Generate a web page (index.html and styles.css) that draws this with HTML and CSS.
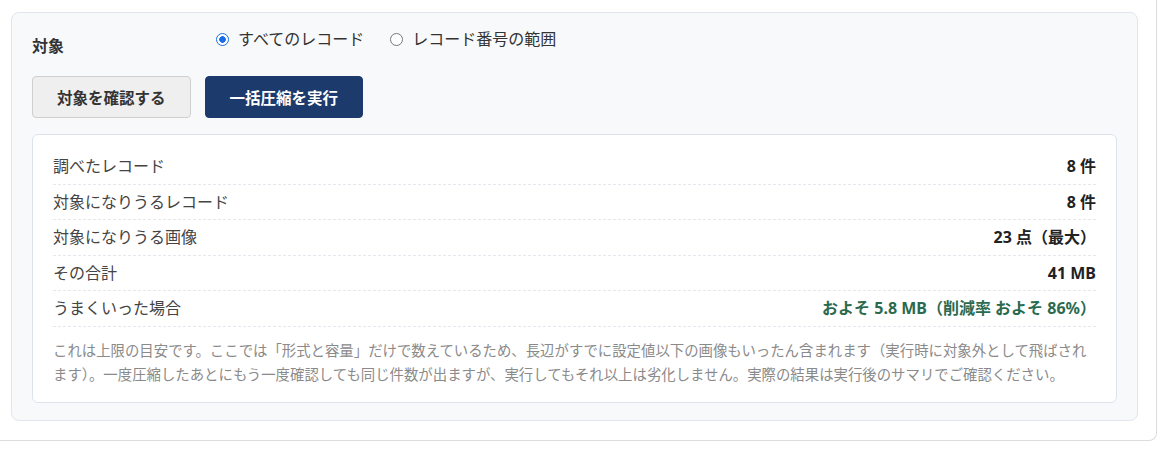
FILE: index.html
```html
<!DOCTYPE html>
<html lang="ja">
<head>
<meta charset="utf-8">
<title>一括圧縮</title>
<link rel="stylesheet" href="styles.css">
</head>
<body>
<div class="page">
  <section class="panel">
    <div class="field">
      <div class="field-label">対象</div>
      <div class="radios">
        <label class="radio"><input type="radio" name="target" checked><span>すべてのレコード</span></label>
        <label class="radio"><input type="radio" name="target"><span>レコード番号の範囲</span></label>
      </div>
    </div>
    <div class="actions">
      <button class="btn btn-secondary" type="button">対象を確認する</button>
      <button class="btn btn-primary" type="button">一括圧縮を実行</button>
    </div>
    <div class="result">
      <dl class="stats">
        <div class="stat"><dt>調べたレコード</dt><dd>8 件</dd></div>
        <div class="stat"><dt>対象になりうるレコード</dt><dd>8 件</dd></div>
        <div class="stat"><dt>対象になりうる画像</dt><dd>23 点（最大）</dd></div>
        <div class="stat"><dt>その合計</dt><dd>41 MB</dd></div>
        <div class="stat"><dt>うまくいった場合</dt><dd class="good">およそ 5.8 MB（削減率 およそ 86%）</dd></div>
      </dl>
      <p class="note">これは上限の目安です。ここでは「形式と容量」だけで数えているため、長辺がすでに設定値以下の画像もいったん含まれます（実行時に対象外として飛ばされます）。一度圧縮したあとにもう一度確認しても同じ件数が出ますが、実行してもそれ以上は劣化しません。実際の結果は実行後のサマリでご確認ください。</p>
    </div>
  </section>
</div>
</body>
</html>
```

FILE: styles.css
```css
* { box-sizing: border-box; }

body {
  margin: 0;
  background: #ffffff;
  font-family: "Noto Sans", "Noto Sans CJK JP", sans-serif;
  color: #333;
}

.page {
  width: 1157px;
  padding: 12px 18px 19px 11px;
  border-right: 1px solid #dcdcdc;
  border-bottom: 1px solid #dcdcdc;
  border-bottom-right-radius: 8px;
  background: #fff;
}

.panel {
  background: #f8f9fb;
  border: 1px solid #e1e6ee;
  border-radius: 8px;
  padding: 19px 20px 17px 20px;
}

.field {
  display: grid;
  grid-template-columns: 184px 1fr;
}

.field-label {
  font-size: 16px;
  font-weight: 700;
  line-height: 20px;
  padding-top: 4px;
  color: #333;
}

.radios {
  display: flex;
  align-items: center;
  gap: 26px;
  height: 20px;
  margin-top: -3px;
}

.radio {
  display: flex;
  align-items: center;
  font-size: 16px;
  line-height: 20px;
  color: #333;
}

.radio input {
  appearance: none;
  -webkit-appearance: none;
  width: 13px;
  height: 13px;
  margin: 0 9px 0 0;
  border: 1px solid #767676;
  border-radius: 50%;
  background: #fff;
}

.radio input:checked {
  border: 1.5px solid #1a6fe6;
  background: radial-gradient(circle, #1a6fe6 0 3px, #fff 3.6px);
}

.actions {
  display: flex;
  gap: 14px;
  margin-top: 20px;
}

.btn {
  height: 42px;
  padding: 0 24px;
  border-radius: 4px;
  font-family: "Noto Sans CJK JP", sans-serif;
  font-size: 15.5px;
  font-weight: 700;
  cursor: pointer;
}

.btn-secondary {
  background: #efefef;
  border: 1px solid #cfcfcf;
  color: #333;
}

.btn-primary {
  background: #1c3a6b;
  border: 1px solid #1c3a6b;
  color: #fff;
}

.result {
  margin-top: 16px;
  background: #fff;
  border: 1px solid #dde3ea;
  border-radius: 6px;
  padding: 14px 20px 15px;
}

.stats {
  margin: 0;
}

.stat {
  display: flex;
  justify-content: space-between;
  padding: 8px 0;
  line-height: 18.5px;
  font-size: 16px;
  border-bottom: 1px dashed #e4e8ee;
}

.stat dt {
  color: #444;
}

.stat dd {
  margin: 0;
  font-weight: 700;
  color: #222;
}

.stat dd.good {
  color: #2b6a4e;
}

.note {
  margin: 12px 0 0;
  font-size: 14.4px;
  line-height: 24px;
  color: #8a8a8a;
}
```
